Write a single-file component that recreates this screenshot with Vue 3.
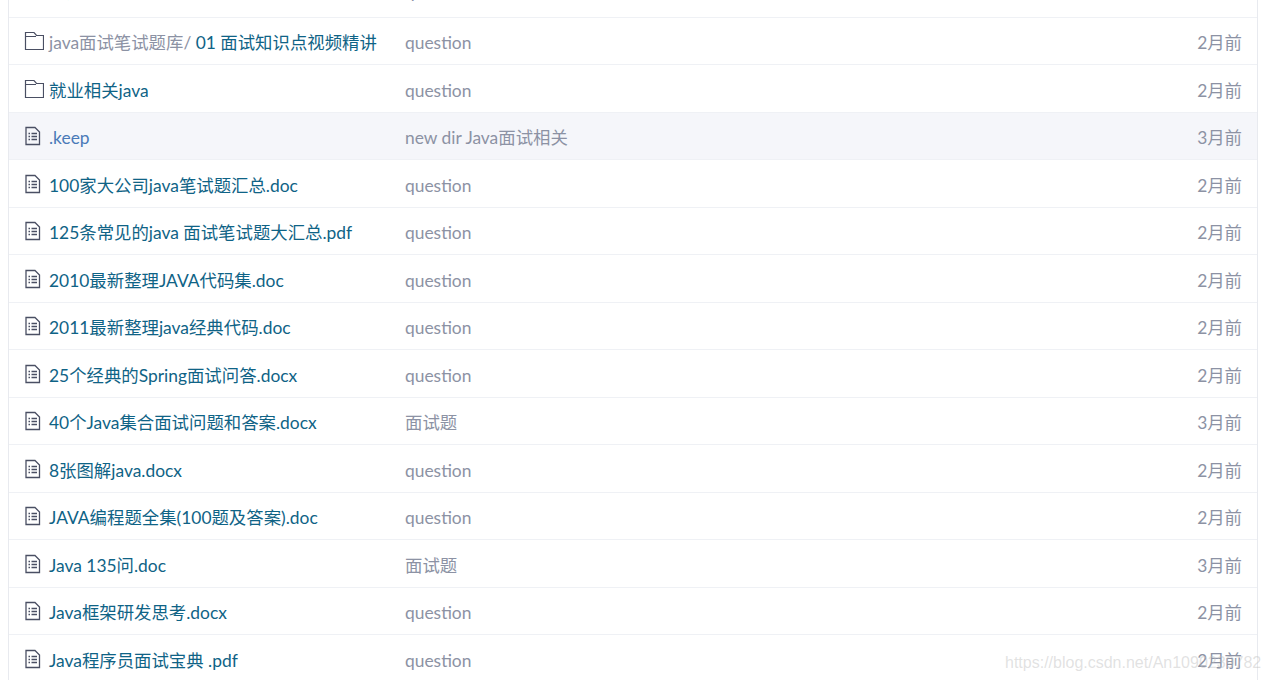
<template>
  <div class="page">
    <div class="list">
      <div v-for="row in rows" :key="row.name" class="row" :class="{ active: row.active, clipped: row.clipped }">
        <div class="name">
          <svg v-if="row.dir" class="icon" width="20" height="20" viewBox="0 0 20 20">
            <path d="M1.5 18.5V1.5H10L12.5 4.5H19.5V18.5Z" fill="none" stroke="#4a4f63" stroke-width="1.2" />
            <path d="M1.5 5.5H12" fill="none" stroke="#4a4f63" stroke-width="1" />
          </svg>
          <svg v-else class="icon" width="20" height="20" viewBox="0 0 20 20">
            <path d="M2 1.5H11L15.5 6V18.5H2Z" fill="none" stroke="#4a4f63" stroke-width="1.3" />
            <path d="M4.5 7.5H6M7.5 7.5H13M4.5 10.5H6M7.5 10.5H13M4.5 13.5H6M7.5 13.5H13" fill="none" stroke="#4a4f63" stroke-width="1.3" />
          </svg>
          <span class="link"><span v-if="row.prefix" class="prefix">{{ row.prefix }}</span>{{ row.name }}</span>
        </div>
        <div class="msg">{{ row.msg }}</div>
        <div class="time">{{ row.time }}</div>
      </div>
    </div>
    <div class="mark">https://blog.csdn.net/An1090239782</div>
  </div>
</template>

<script setup>
const q = 'question'
const rows = [
  { name: '手册', dir: true, msg: q, time: '2月前', clipped: true },
  { name: ' 01 面试知识点视频精讲', prefix: 'java面试笔试题库/', dir: true, msg: q, time: '2月前' },
  { name: '就业相关java', dir: true, msg: q, time: '2月前' },
  { name: '.keep', msg: 'new dir Java面试相关', time: '3月前', active: true },
  { name: '100家大公司java笔试题汇总.doc', msg: q, time: '2月前' },
  { name: '125条常见的java 面试笔试题大汇总.pdf', msg: q, time: '2月前' },
  { name: '2010最新整理JAVA代码集.doc', msg: q, time: '2月前' },
  { name: '2011最新整理java经典代码.doc', msg: q, time: '2月前' },
  { name: '25个经典的Spring面试问答.docx', msg: q, time: '2月前' },
  { name: '40个Java集合面试问题和答案.docx', msg: '面试题', time: '3月前' },
  { name: '8张图解java.docx', msg: q, time: '2月前' },
  { name: 'JAVA编程题全集(100题及答案).doc', msg: q, time: '2月前' },
  { name: 'Java 135问.doc', msg: '面试题', time: '3月前' },
  { name: 'Java框架研发思考.docx', msg: q, time: '2月前' },
  { name: 'Java程序员面试宝典 .pdf', msg: q, time: '2月前' }
]
</script>

<style>
html, body {
  margin: 0;
  height: 680px;
  overflow: hidden;
  background: #fff;
}
</style>

<style scoped>
.page {
  position: relative;
  height: 680px;
  overflow: hidden;
  font-family: Lato, "Noto Sans CJK SC", sans-serif;
  font-size: 17.4px;
  font-weight: 400;
  line-height: 24px;
}
.list {
  margin: -38px 11px 0 8px;
  border-left: 1px solid #e8eaef;
  border-right: 1px solid #e8eaef;
}
.row {
  display: flex;
  align-items: center;
  box-sizing: border-box;
  height: 47.5px;
  padding: 5px 15px 0;
  border-bottom: 1px solid #eff1f5;
}
.row.clipped {
  height: 55.5px;
}
.row.active {
  background: #f5f6fa;
}
.name {
  display: flex;
  align-items: center;
  width: 381px;
  flex: none;
}
.icon {
  flex: none;
  margin-right: 5px;
  position: relative;
  top: -2px;
}
.link {
  color: #0f6386;
  white-space: pre;
}
.active .link {
  color: #4a7ab8;
}
.prefix {
  color: #8c92a4;
}
.msg {
  flex: 1;
  color: #8c92a4;
}
.time {
  color: #8c92a4;
}
.mark {
  position: absolute;
  left: 1005px;
  top: 651px;
  font-family: "Liberation Sans", sans-serif;
  font-size: 16px;
  font-weight: 400;
  color: rgba(190, 190, 190, 0.45);
  white-space: nowrap;
}
</style>
